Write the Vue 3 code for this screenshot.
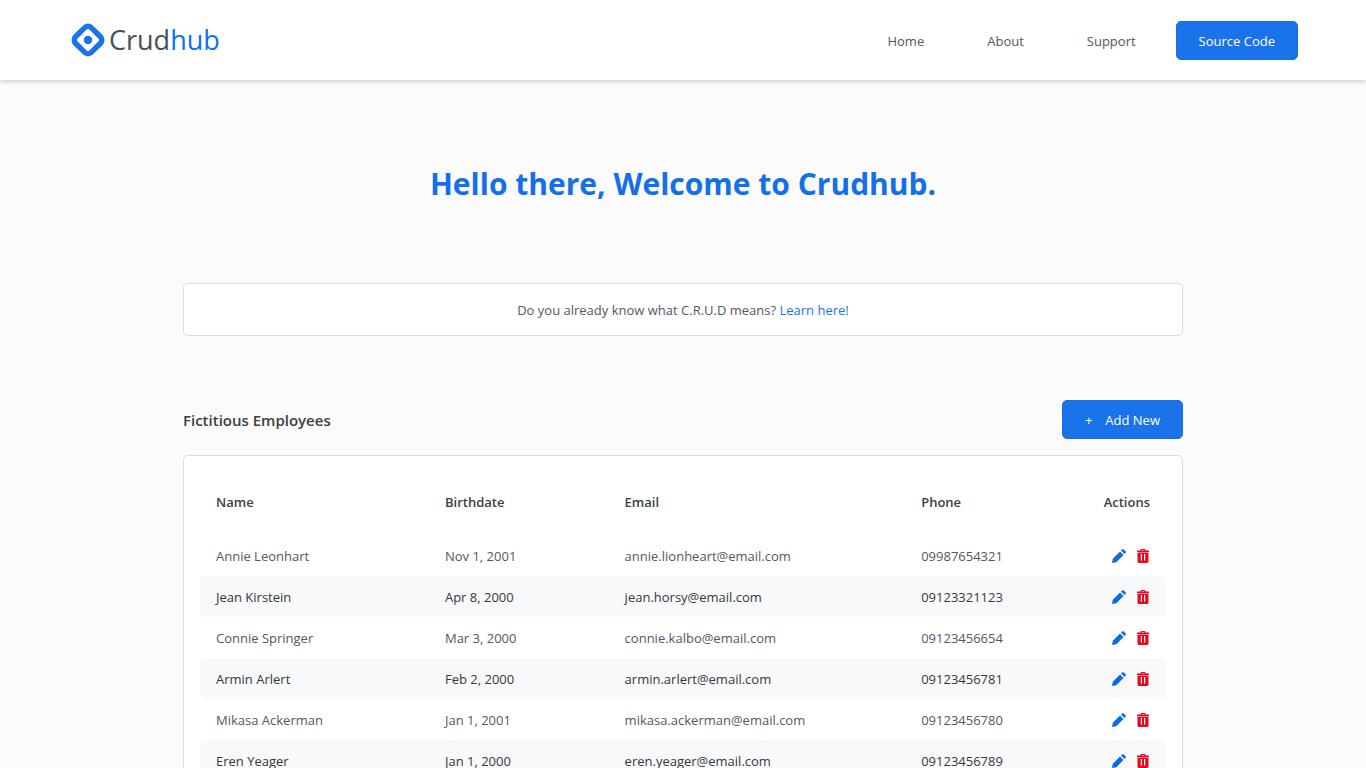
<script setup>
const navLinks = ['Home', 'About', 'Support']

const employees = [
  { name: 'Annie Leonhart', birthdate: 'Nov 1, 2001', email: 'annie.lionheart@email.com', phone: '09987654321' },
  { name: 'Jean Kirstein', birthdate: 'Apr 8, 2000', email: 'jean.horsy@email.com', phone: '09123321123' },
  { name: 'Connie Springer', birthdate: 'Mar 3, 2000', email: 'connie.kalbo@email.com', phone: '09123456654' },
  { name: 'Armin Arlert', birthdate: 'Feb 2, 2000', email: 'armin.arlert@email.com', phone: '09123456781' },
  { name: 'Mikasa Ackerman', birthdate: 'Jan 1, 2001', email: 'mikasa.ackerman@email.com', phone: '09123456780' },
  { name: 'Eren Yeager', birthdate: 'Jan 1, 2000', email: 'eren.yeager@email.com', phone: '09123456789' },
]
</script>

<template>
  <div class="page">
    <header class="navbar">
      <a class="brand" href="#">
        <svg class="brand-mark" viewBox="0 0 34 34" aria-hidden="true">
          <rect x="5.9" y="5.9" width="22.2" height="22.2" rx="4.6" fill="#fff" stroke="#1a73e8" stroke-width="5.4" transform="rotate(45 17 17)" />
          <circle cx="17" cy="17" r="4.2" fill="#1a73e8" />
        </svg>
        <span class="brand-name">Crud<span class="brand-accent">hub</span></span>
      </a>
      <nav class="nav">
        <a v-for="link in navLinks" :key="link" class="nav-link" href="#">{{ link }}</a>
        <a class="btn" href="#">Source Code</a>
      </nav>
    </header>

    <main class="content">
      <h1 class="title">Hello there, Welcome to Crudhub.</h1>

      <p class="notice">Do you already know what C.R.U.D means? <a href="#">Learn here!</a></p>

      <div class="section-head">
        <h2>Fictitious Employees</h2>
        <button class="btn" type="button"><span class="plus">+</span>Add New</button>
      </div>

      <section class="card">
        <table>
          <colgroup>
            <col class="c-name" /><col class="c-birth" /><col class="c-email" /><col class="c-phone" /><col />
          </colgroup>
          <thead>
            <tr>
              <th scope="col">Name</th>
              <th scope="col">Birthdate</th>
              <th scope="col">Email</th>
              <th scope="col">Phone</th>
              <th scope="col" class="right">Actions</th>
            </tr>
          </thead>
          <tbody>
            <tr v-for="e in employees" :key="e.phone">
              <td>{{ e.name }}</td>
              <td>{{ e.birthdate }}</td>
              <td>{{ e.email }}</td>
              <td>{{ e.phone }}</td>
              <td>
                <div class="actions">
                  <button class="icon-btn edit" type="button" :aria-label="`Edit ${e.name}`">
                    <svg viewBox="0 0 14 14" aria-hidden="true">
                      <path d="M0 14 .8 9.700 8 2.500 11.500 6 4.300 13.200ZM9 1.500 10.200.4Q11-.2 11.700.4L13.600 2.300Q14.200 3 13.600 3.800L12.500 5Z" fill="currentColor" />
                    </svg>
                  </button>
                  <button class="icon-btn delete" type="button" :aria-label="`Delete ${e.name}`">
                    <svg viewBox="0 0 14 14" aria-hidden="true">
                      <path d="M1 1.500H4.200Q4.200 0 5.700 0H8.300Q9.800 0 9.800 1.500H13V3H1ZM5.500 1.500H8.500Q8.500 1 8 1H6Q5.500 1 5.500 1.500ZM1.500 3.600H12.500V12.500Q12.500 14 11 14H3Q1.500 14 1.500 12.500ZM4.800 5V11.500H6V5ZM8 5V11.500H9.200V5Z" fill="currentColor" fill-rule="evenodd" />
                    </svg>
                  </button>
                </div>
              </td>
            </tr>
          </tbody>
        </table>
      </section>
    </main>
  </div>
</template>

<style>
body {
  margin: 0;
  background: #fbfbfb;
}
</style>

<style scoped>
.page {
  font-family: "Segoe UI", "Open Sans", "Noto Sans", sans-serif;
  font-size: 13px;
  line-height: 20px;
  color: #54585d;
}

a {
  color: #1a73e8;
  text-decoration: none;
}

.navbar {
  display: flex;
  align-items: center;
  justify-content: space-between;
  box-sizing: border-box;
  height: 80px;
  padding: 0 68px 0 71px;
  background: #fff;
  box-shadow: 0 2px 4px rgba(0, 0, 0, 0.16);
}

.brand {
  display: flex;
  align-items: center;
  gap: 4px;
}

.brand-mark {
  width: 34px;
  height: 34px;
}

.brand-name {
  font-size: 27px;
  line-height: 40px;
  color: #495057;
}

.brand-accent {
  color: #0d6efd;
}

.nav {
  display: flex;
  align-items: center;
  gap: 63px;
}

.nav-link {
  padding-top: 2px;
  color: #54585d;
}

.nav .btn {
  margin-left: -23px;
}

.btn {
  display: inline-flex;
  align-items: center;
  box-sizing: border-box;
  height: 39px;
  padding: 1px 22px 0;
  border: 1px solid #0d6fec;
  border-radius: 5px;
  background: #1a73e8;
  color: #fff;
  font: inherit;
}

.plus {
  margin-right: 13px;
}

.content {
  max-width: 1000px;
  margin: 0 auto;
  padding: 80px 16px 64px;
}

.title {
  margin: 0 0 75px;
  font-size: 30px;
  line-height: 48px;
  font-weight: 700;
  text-align: center;
  color: #1470e8;
}

.notice {
  margin: 0 0 64px;
  padding: 16px 16px 15px;
  border: 1px solid #dadce0;
  border-radius: 5px;
  background: #fff;
  text-align: center;
}

.section-head {
  display: flex;
  align-items: center;
  justify-content: space-between;
  margin-bottom: 16px;
}

.section-head h2 {
  margin: 0;
  font-size: 15px;
  line-height: 24px;
  font-weight: 600;
  color: #3c4043;
}

.card {
  padding: 16px;
  border: 1px solid #dadce0;
  border-radius: 5px;
  background: #fff;
}

table {
  width: 100%;
  table-layout: fixed;
  border-collapse: separate;
  border-spacing: 0;
}

.c-name { width: 23.7%; }
.c-birth { width: 18.6%; }
.c-email { width: 30.7%; }
.c-phone { width: 15%; }

th {
  padding: 20px 16px 23px;
  text-align: left;
  font-weight: 600;
  color: #3c4043;
}

th.right {
  text-align: right;
}

td {
  padding: 11px 16px 10px;
}

tbody tr:nth-child(even) td {
  background: #f8f9fb;
  color: #34383c;
}

td:first-child {
  border-radius: 6px 0 0 6px;
}

td:last-child {
  border-radius: 0 6px 6px 0;
}

.actions {
  display: flex;
  justify-content: flex-end;
  gap: 10px;
}

.icon-btn {
  display: flex;
  padding: 0;
  border: 0;
  background: none;
}

.icon-btn svg {
  width: 14px;
  height: 14px;
}

.edit { color: #1169e6; }
.delete { color: #e30b20; }
</style>
